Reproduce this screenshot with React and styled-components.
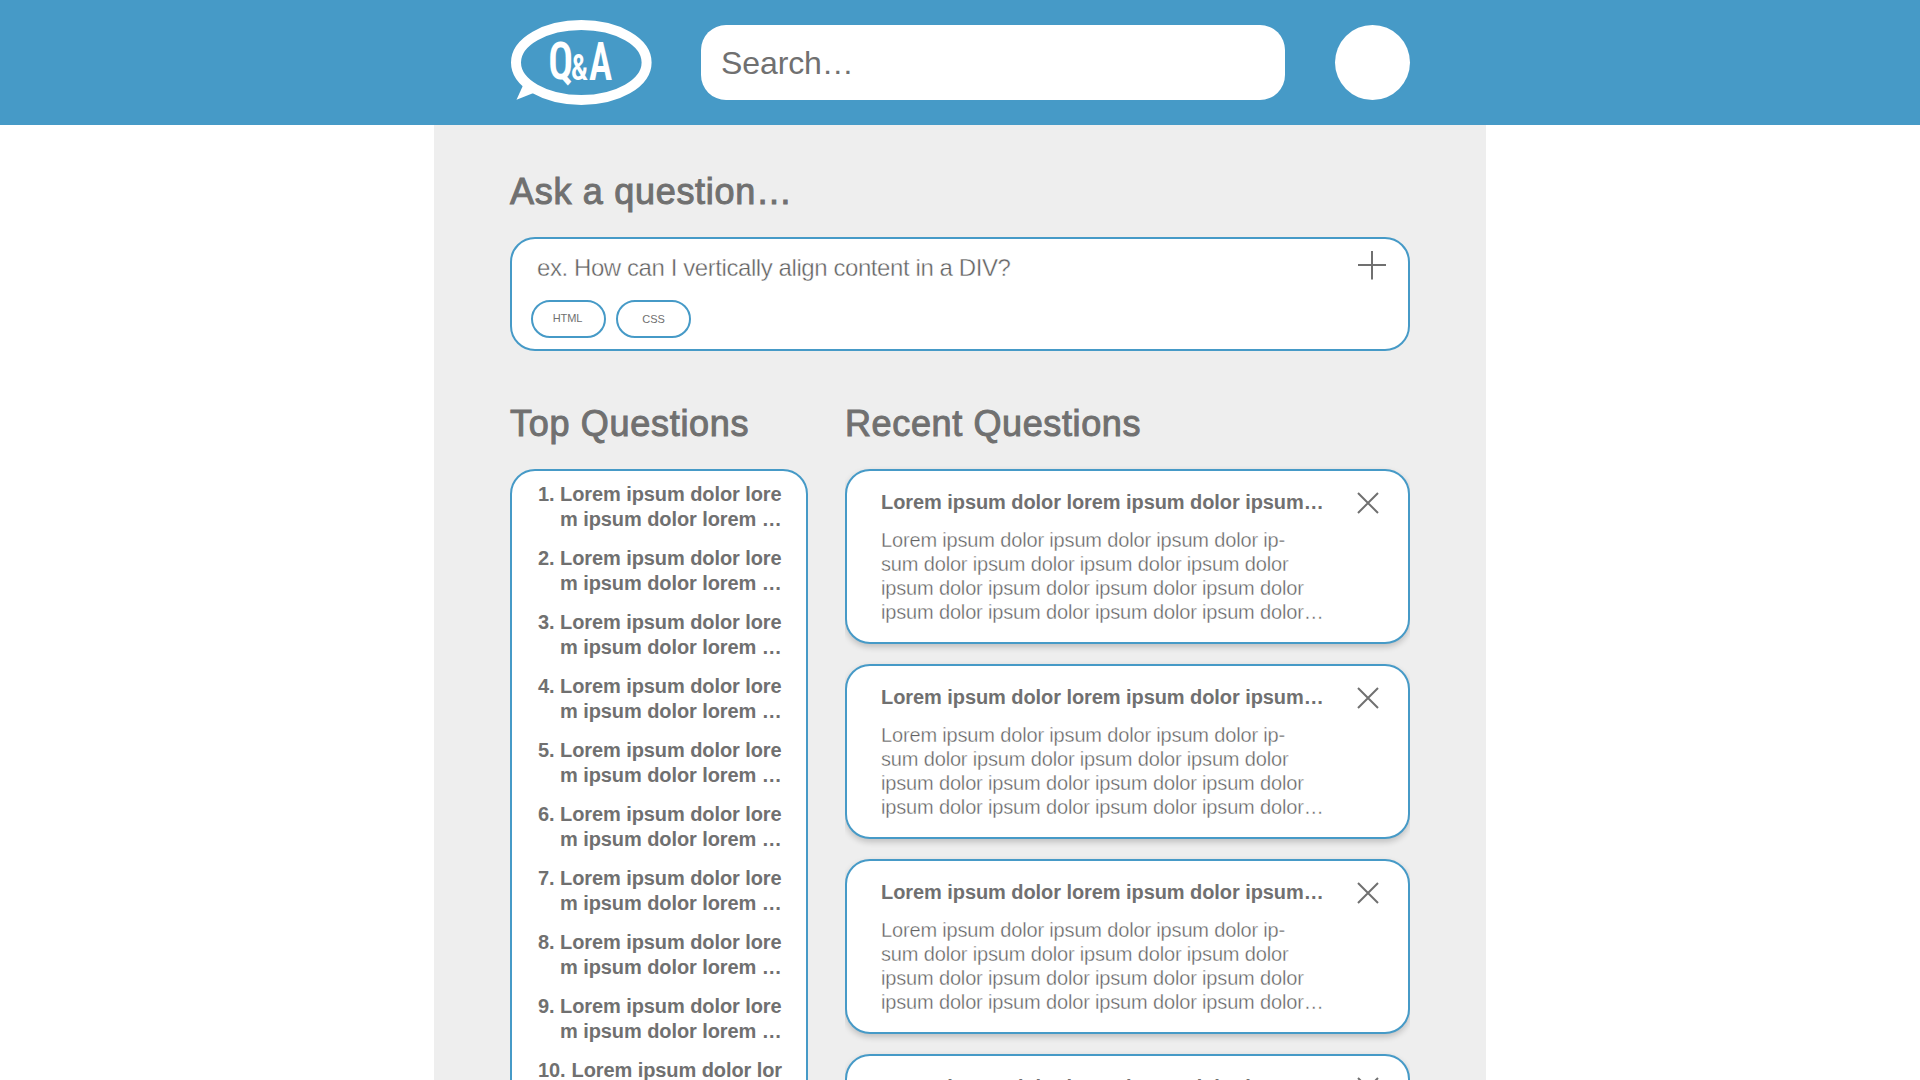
import React from "react";
import styled, { createGlobalStyle } from "styled-components";

const BLUE = "#469ac7";
const GREY = "#707070";
const LIGHT_TEXT = "#626262";

const GlobalStyle = createGlobalStyle`
  *, *::before, *::after { box-sizing: border-box; }
  html, body { margin: 0; background: #fff; overflow: hidden; }
  body {
    font-family: "Liberation Sans", Arial, sans-serif;
    color: ${GREY};
    -webkit-font-smoothing: antialiased;
  }
`;

const Page = styled.div`
  height: 100vh;
  overflow: hidden;
  display: flex;
  flex-direction: column;
  align-items: center;
`;

const Header = styled.header`
  flex: none;
  width: 100%;
  height: 125px;
  display: flex;
  justify-content: center;
  background: ${BLUE};
`;

const HeaderInner = styled.div`
  width: 900px;
  display: grid;
  grid-template-columns: 141px 584px 75px;
  justify-content: space-between;
  align-items: center;
`;

const Logo = styled.svg`
  display: block;
  width: 142px;
  height: 89px;
  overflow: visible;
`;

const Search = styled.div`
  height: 75px;
  padding: 1px 0 0 20px;
  border-radius: 25px;
  background: #fff;
  font-size: 32px;
  line-height: 75px;
  letter-spacing: -0.1px;
`;

const Avatar = styled.div`
  width: 75px;
  height: 75px;
  border-radius: 50%;
  background: #fff;
`;

const Main = styled.main`
  flex: 1;
  min-height: 0;
  width: 1052px;
  padding: 47px 76px 0;
  background: #eee;
  overflow: hidden;
`;

const Heading = styled.h2`
  margin: 0 0 25px;
  font-size: 36px;
  font-weight: 400;
  line-height: 40px;
  letter-spacing: ${(p) => p.$tracking}px;
  -webkit-text-stroke: 1px ${GREY};
  white-space: nowrap;
`;

const Panel = styled.section`
  border: 2px solid ${BLUE};
  border-radius: 25px;
  background: #fff;
`;

const AskPanel = styled(Panel)`
  height: 114px;
  padding: 12px 21px 0 19px;
  display: flex;
  justify-content: space-between;
`;

const Prompt = styled.div`
  padding: 3px 0 0 6px;
  color: ${LIGHT_TEXT};
  font-size: 24px;
  line-height: 28px;
  letter-spacing: -0.42px;
  -webkit-text-stroke: 0.4px #fff;
  white-space: nowrap;
`;

const Tags = styled.div`
  display: flex;
  gap: 10px;
  margin-top: 18px;
`;

const Tag = styled.span`
  width: 75px;
  height: 38px;
  padding-top: ${(p) => p.$drop}px;
  padding-right: ${(p) => p.$shift}px;
  border: 2px solid ${BLUE};
  border-radius: 19px;
  font-size: 11px;
  line-height: 32px;
  letter-spacing: -0.1px;
  text-align: center;
`;

const PlusIcon = styled.svg`
  width: 30px;
  height: 30px;
  stroke: ${GREY};
  stroke-width: 2;
`;

const Columns = styled.div`
  display: grid;
  grid-template-columns: 298px 565px;
  justify-content: space-between;
  margin-top: 53px;
`;

const TopPanel = styled(Panel)`
  height: 760px;
  padding: 11px 0 0 26px;
`;

const List = styled.ol`
  margin: 0;
  padding: 0;
  list-style: none;
  display: grid;
  gap: 14px;
`;

const ListItem = styled.li`
  display: flex;
  font-size: 20px;
  font-weight: 700;
  line-height: 25px;
  letter-spacing: -0.08px;
  white-space: nowrap;
`;

const Number = styled.span`
  width: ${(p) => (p.$wide ? 33.5 : 22)}px;
`;

const Line = styled.span`
  display: block;
`;

const Cards = styled.div`
  display: grid;
  gap: 20px;
`;

const Card = styled(Panel)`
  height: 175px;
  padding: 19px 29px 0 34px;
  display: flex;
  justify-content: space-between;
  box-shadow: 0 3px 6px rgba(0, 0, 0, 0.2);
  clip-path: inset(-10px 0 -16px 0);
`;

const CardTitle = styled.h3`
  margin: 0 0 14px;
  font-size: 20px;
  font-weight: 700;
  line-height: 24px;
  letter-spacing: -0.07px;
  white-space: nowrap;
`;

const CardBody = styled.p`
  margin: 0;
  color: ${LIGHT_TEXT};
  font-size: 20px;
  line-height: 24px;
  letter-spacing: -0.16px;
  -webkit-text-stroke: 0.35px #fff;
  white-space: nowrap;
`;

const CloseIcon = styled.svg`
  width: 22px;
  height: 22px;
  margin-top: 2px;
  stroke: ${GREY};
  stroke-width: 2;
`;

const bodyLines = [
  "Lorem ipsum dolor ipsum dolor ipsum dolor ip-",
  "sum dolor ipsum dolor ipsum dolor ipsum dolor",
  "ipsum dolor ipsum dolor ipsum dolor ipsum dolor",
  "ipsum dolor ipsum dolor ipsum dolor ipsum dolor…",
];

function BubbleLogo() {
  return (
    <Logo viewBox="510 18 142 89" fill="#fff">
      <ellipse cx="581.3" cy="62.5" rx="65.3" ry="37.5" fill="none" stroke="#fff" strokeWidth="10" />
      <path d="M523 85.5 L516.5 99.8 L533.5 93 L532 86 Z" />
      <g fontFamily="'Roboto Condensed', Roboto, sans-serif" fontWeight="600">
        <text transform="translate(548.2 79.4) scale(0.8 1)" fontSize="51.5">Q</text>
        <text transform="translate(570.8 79.8) scale(0.84 1)" fontSize="36.5" fontWeight="500">&amp;</text>
        <text transform="translate(589 79.8) scale(0.74 1)" fontSize="53">A</text>
      </g>
    </Logo>
  );
}

function TopItem({ n }) {
  const wide = n > 9;
  return (
    <ListItem>
      <Number $wide={wide}>{n}.</Number>
      <div>
        <Line>{wide ? "Lorem ipsum dolor lor" : "Lorem ipsum dolor lore"}</Line>
        <Line>m ipsum dolor lorem …</Line>
      </div>
    </ListItem>
  );
}

function QuestionCard() {
  return (
    <Card as="article">
      <div>
        <CardTitle>Lorem ipsum dolor lorem ipsum dolor ipsum…</CardTitle>
        <CardBody>
          {bodyLines.map((line, i) => (
            <Line key={i}>{line}</Line>
          ))}
        </CardBody>
      </div>
      <CloseIcon viewBox="0 0 22 22">
        <path d="M1 1 L21 21 M21 1 L1 21" />
      </CloseIcon>
    </Card>
  );
}

export default function App() {
  return (
    <Page>
      <GlobalStyle />
      <Header>
        <HeaderInner>
          <BubbleLogo />
          <Search>Search…</Search>
          <Avatar />
        </HeaderInner>
      </Header>
      <Main>
        <Heading $tracking={0.7}>Ask a question…</Heading>
        <AskPanel>
          <div>
            <Prompt>ex. How can I vertically align content in a DIV?</Prompt>
            <Tags>
              <Tag $drop={0} $shift={2}>HTML</Tag>
              <Tag $drop={1} $shift={0}>CSS</Tag>
            </Tags>
          </div>
          <PlusIcon viewBox="0 0 30 30">
            <path d="M15 0 V28.5 M1 14 H29" />
          </PlusIcon>
        </AskPanel>
        <Columns>
          <div>
            <Heading $tracking={0.7}>Top Questions</Heading>
            <TopPanel>
              <List>
                {[1, 2, 3, 4, 5, 6, 7, 8, 9, 10].map((n) => (
                  <TopItem key={n} n={n} />
                ))}
              </List>
            </TopPanel>
          </div>
          <div>
            <Heading $tracking={0.62}>Recent Questions</Heading>
            <Cards>
              {[0, 1, 2, 3].map((i) => (
                <QuestionCard key={i} />
              ))}
            </Cards>
          </div>
        </Columns>
      </Main>
    </Page>
  );
}
